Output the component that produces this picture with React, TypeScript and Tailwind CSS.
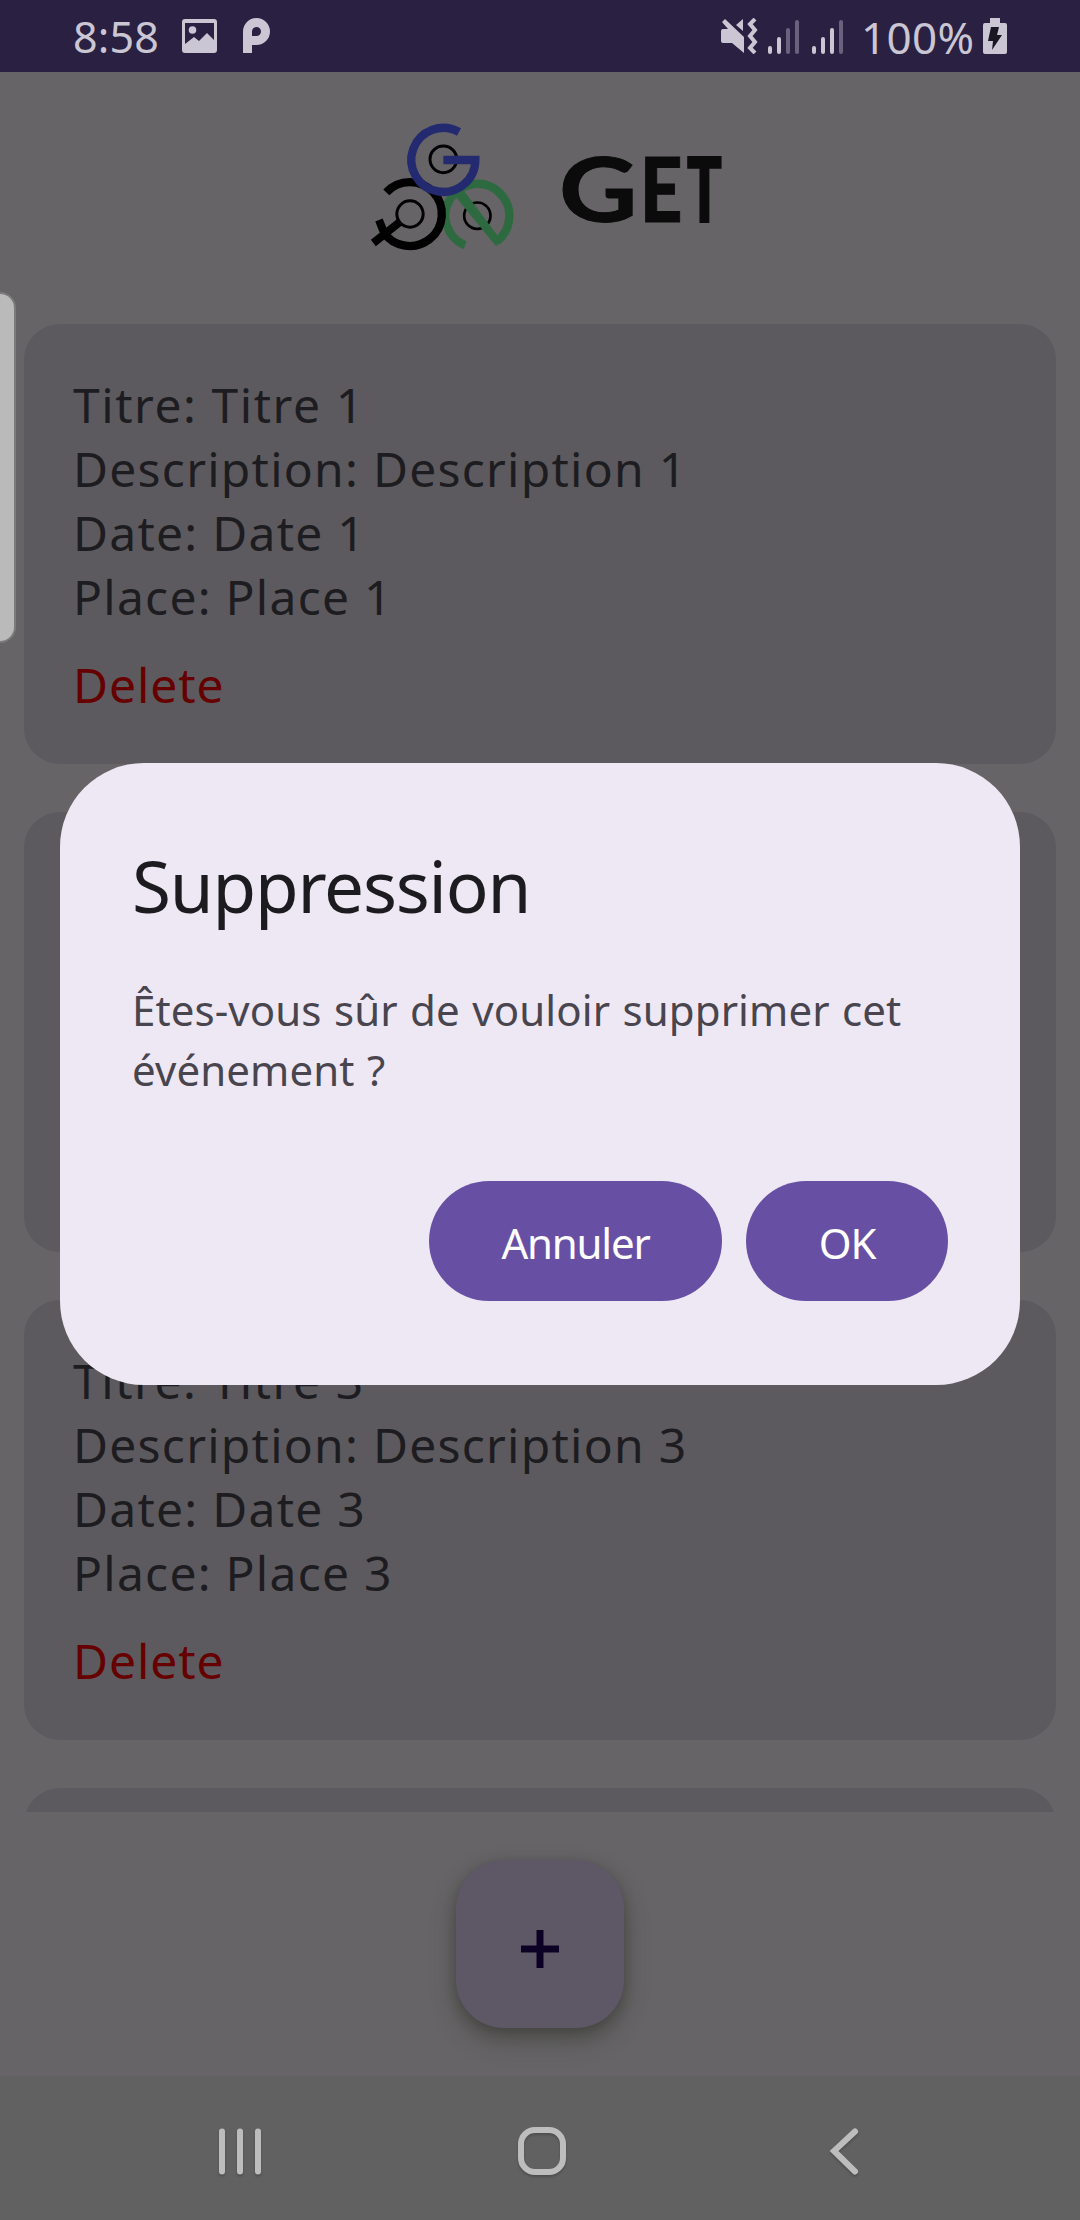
const events = [1, 2, 3, 4];

function StatusBar() {
  return (
    <header className="flex h-[72px] shrink-0 items-center bg-[#292042] text-[#cac6d3]">
      <span className="ml-[73px] w-[109px] pt-[2px] text-[43px] leading-[60px] tracking-[0.2px]">8:58</span>
      <svg width="35" height="34" viewBox="0 0 35 34" className="shrink-0" fill="currentColor">
        <path
          fillRule="evenodd"
          d="M3 0H32Q35 0 35 3V31Q35 34 32 34H3Q0 34 0 31V3Q0 0 3 0ZM3 4V25L12 18L17 22L25 14L32 21V4Z"
        />
        <circle cx="10.5" cy="11" r="3.8" />
      </svg>
      <svg width="27" height="36" viewBox="0 0 27 36" className="ml-[26px] shrink-0">
        <path
          fill="none"
          stroke="currentColor"
          strokeWidth="9"
          d="M4.5 35V13.5A9 9 0 1 1 13.5 22.500H6"
        />
      </svg>
      <div className="ml-auto flex items-center">
        <svg width="127" height="36" viewBox="0 0 127 36" fill="currentColor">
          <path d="M3 11H8L2 4L5 1L24 19V35L12 25H3Q1 25 1 23V13Q1 11 3 11ZM23 1V13L16 7Z" />
          <path
            d="M35 1L30 6L35 12L30 18L35 24L30 30L35 35"
            fill="none"
            stroke="currentColor"
            strokeWidth="4"
          />
          <g stroke="currentColor" strokeWidth="4" strokeLinecap="round">
            <path d="M50 30V34M59 21V34" />
            <path d="M68 12V34M77 4V34M121 4V34" opacity=".4" />
            <path d="M94 30V34M103 21V34M112 12V34" />
          </g>
        </svg>
        <span className="ml-[14px] w-[122px] whitespace-nowrap pt-px text-[44px] leading-[60px] tracking-[0.3px]">100%</span>
        <svg width="24" height="36" viewBox="0 0 24 36" className="mr-[73px]">
          <path fill="currentColor" d="M7 0H17V5H22Q24 5 24 7V34Q24 36 22 36H2Q0 36 0 34V7Q0 5 2 5H7Z" />
          <path fill="#1b1722" d="M8 9H16L14 17H19L9 32L10 23H5Z" />
        </svg>
      </div>
    </header>
  );
}

function Emblem() {
  return (
    <svg width="147" height="134" viewBox="60 60 441 402" fill="none">
      <path d="M345 436A96 96 0 1 1 440 424" stroke="#2d6a40" strokeWidth="25" />
      <circle cx="382" cy="347" r="39.5" stroke="#000" strokeWidth="8" />
      <path d="M312 284L340 270L454 422L438 439Z" fill="#2d6a40" />
      <g stroke="#000">
        <path d="M109 277A96 96 0 1 1 100 396" strokeWidth="25" />
        <circle cx="180" cy="342" r="39.5" strokeWidth="9" />
        <path d="M152 364L70 429M87 360L106 408" strokeWidth="24" />
      </g>
      <circle cx="280" cy="178" r="40" stroke="#000" strokeWidth="9" />
      <path d="M327 96A96 96 0 1 0 376 180H280" stroke="#232a70" strokeWidth="25" />
    </svg>
  );
}

function Wordmark() {
  return (
    <h1 className="ml-[42px] mt-[12px] flex font-['Lato',sans-serif] text-[90px] font-black leading-[110px] text-[#0b0b0b]">
      <span className="w-[81px] origin-left scale-x-[1.2] font-bold [-webkit-text-stroke:1px_#0b0b0b]">G</span>
      <span className="w-[47px] origin-left scale-x-[0.82] [-webkit-text-stroke:1px_#0b0b0b]">E</span>
      <span className="origin-left scale-x-[0.64] [-webkit-text-stroke:2px_#0b0b0b]">T</span>
    </h1>
  );
}

function EventCard({ n }: { n: number }) {
  return (
    <article className="h-[440px] shrink-0 rounded-[36px] bg-[#5c5a5e] pl-[49px] pt-[49px] text-[48px] leading-[64px] tracking-[1.25px] text-[#1d1c20]">
      <p className="tracking-[1.55px]">Titre: Titre {n}</p>
      <p>Description: Description {n}</p>
      <p>Date: Date {n}</p>
      <p>Place: Place {n}</p>
      <p className="mt-6 tracking-[0.9px] text-[#660000]">Delete</p>
    </article>
  );
}

function NavBar() {
  return (
    <nav className="flex h-36 shrink-0 items-center bg-[#616161] text-[#bdbdbd]">
      <svg
        width="1080"
        height="144"
        viewBox="0 0 1080 144"
        fill="none"
        stroke="currentColor"
        className="drop-shadow-[0_2px_1px_rgba(0,0,0,0.2)]"
      >
        <path d="M222 55.500V95.500M240 55.500V95.500M258 55.500V95.500" strokeWidth="6" strokeLinecap="round" />
        <rect x="521" y="54" width="42" height="42" rx="14" strokeWidth="6" />
        <path d="M855 55.500L834 75L855 95.500" strokeWidth="6" strokeLinecap="round" />
      </svg>
    </nav>
  );
}

function DeleteDialog() {
  return (
    <section
      role="dialog"
      className="absolute left-[60px] top-[763px] flex h-[622px] w-[960px] flex-col rounded-[84px] bg-[#eee8f4] px-[72px] pt-[75px]"
    >
      <h2 className="text-[71px] leading-[96px] tracking-[-1.2px] text-[#1c1b1f]">Suppression</h2>
      <p className="mt-[46px] whitespace-nowrap text-[42px] leading-[60px] tracking-[0.1px] [word-spacing:1.4px] text-[#49454f]">
        Êtes-vous sûr de vouloir supprimer cet
        <br />
        événement ?
      </p>
      <div className="mt-[81px] flex justify-end gap-6 text-[42px] leading-[60px] tracking-[-1.2px] text-white">
        <button className="h-[120px] w-[293px] rounded-full bg-[#6750a4] pt-1">Annuler</button>
        <button className="h-[120px] w-[202px] rounded-full bg-[#6750a4] pt-1">OK</button>
      </div>
    </section>
  );
}

export default function App() {
  return (
    <div className="relative flex h-[2220px] w-[1080px] flex-col overflow-hidden bg-[#666466] font-['Noto_Sans',sans-serif]">
      <StatusBar />
      <div className="flex h-[228px] shrink-0 items-start pl-[370px] pt-12">
        <Emblem />
        <Wordmark />
      </div>
      <main className="flex h-[1512px] shrink-0 flex-col gap-12 overflow-hidden px-6 pt-6">
        {events.map((n) => (
          <EventCard key={n} n={n} />
        ))}
      </main>
      <div className="flex h-[264px] shrink-0 items-center justify-center">
        <button className="flex h-[168px] w-[168px] items-center justify-center rounded-[48px] bg-[#5e5866] shadow-[0_12px_24px_rgba(45,48,40,0.4),0_4px_12px_rgba(45,48,40,0.35)]">
          <svg width="38" height="38" viewBox="0 0 38 38" className="mt-[10px]" stroke="#0d0025" strokeWidth="7">
            <path d="M0 19H38M19 0V38" />
          </svg>
        </button>
      </div>
      <NavBar />
      <div className="absolute left-0 top-[292px] h-[351px] w-4 rounded-r-[16px] border-y-2 border-r-2 border-[#7c7b7c] bg-[#bababa]" />
      <DeleteDialog />
    </div>
  );
}
